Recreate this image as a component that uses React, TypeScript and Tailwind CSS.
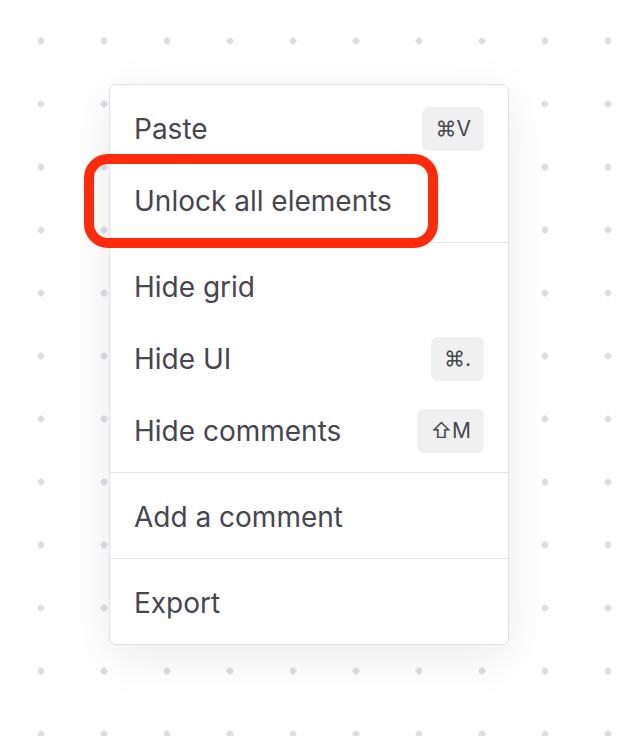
import React from 'react';

type Item = { label: string; kbd?: string };

const groups: Item[][] = [
  [{ label: 'Paste', kbd: '⌘V' }, { label: 'Unlock all elements' }],
  [{ label: 'Hide grid' }, { label: 'Hide UI', kbd: '⌘.' }, { label: 'Hide comments', kbd: '⇧M' }],
  [{ label: 'Add a comment' }],
  [{ label: 'Export' }],
];

function MenuRow({ item }: { item: Item }) {
  return (
    <div className="flex h-[72px] items-center justify-between pl-[24px] pr-[24px]">
      <span className="text-[28px] text-[#46464e]">{item.label}</span>
      {item.kbd && (
        <span className="flex h-[44px] items-center rounded-[7px] bg-[#f0f0f1] px-[13px] text-[21px] text-[#46464e]">
          {item.kbd}
        </span>
      )}
    </div>
  );
}

export default function App() {
  return (
    <div
      className="relative h-[736px] w-[618px] overflow-hidden bg-white bg-[radial-gradient(circle,#dcdde3_3px,transparent_3.6px)] bg-[size:63px_63px] bg-[position:9.5px_9.5px] pl-[109px] pt-[84px]"
      style={{ fontFamily: 'Inter, "Noto Sans", sans-serif' }}
    >
      <div className="relative w-[400px] rounded-[7px] border border-[#dfe0e5] bg-white shadow-[0_12px_48px_rgba(20,20,40,0.09)]">
        {groups.map((g, i) => (
          <div key={i} className={`pt-[8px] pb-[5px] ${i > 0 ? 'border-t border-[#e4e4e7]' : ''}`}>
            {g.map(item => (
              <MenuRow key={item.label} item={item} />
            ))}
          </div>
        ))}
      </div>

      {/* red annotation box */}
      <div className="absolute left-[84px] top-[154px] h-[94px] w-[354px] rounded-[24px] border-[10px] border-[#ff2a0a]" />
    </div>
  );
}
